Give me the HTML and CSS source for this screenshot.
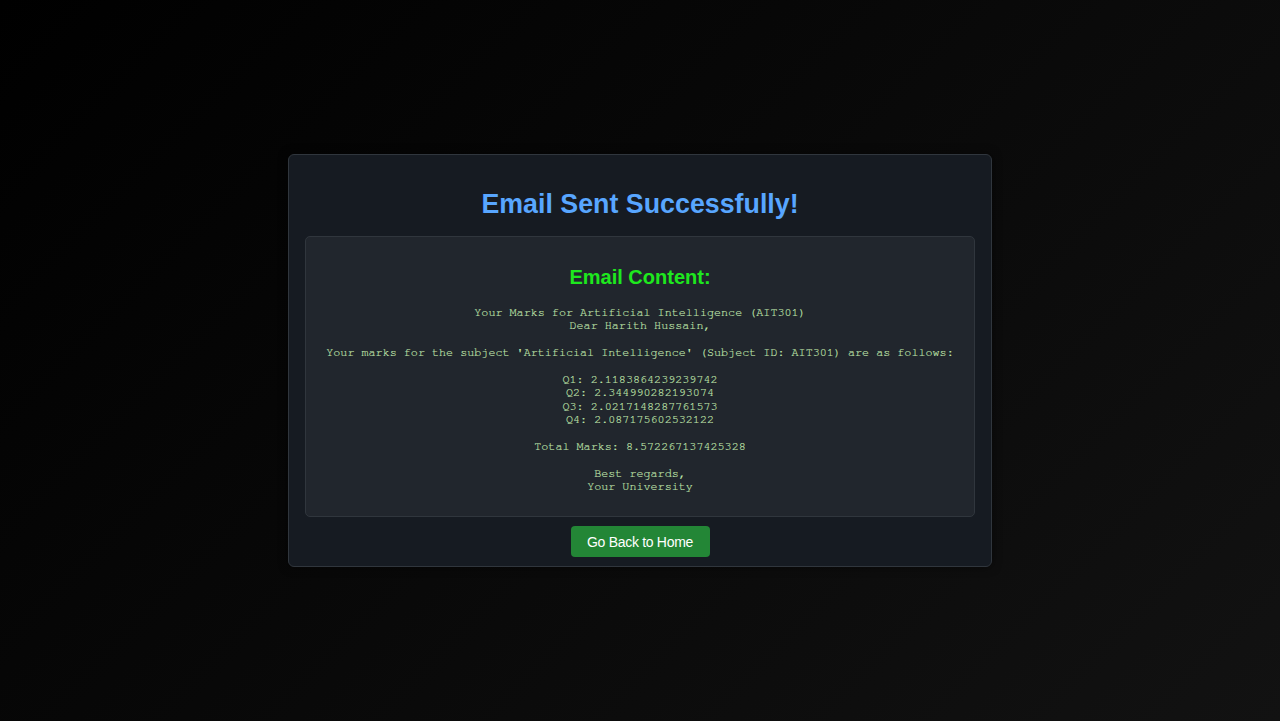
FILE: index.html
```html
<!DOCTYPE html>
<html lang="en">
<head>
<meta charset="utf-8">
<title>Email Sent</title>
<link rel="stylesheet" href="styles.css">
</head>
<body>
<main class="card">
  <h1 class="title">Email Sent Successfully!</h1>
  <section class="email-box">
    <h2 class="email-heading">Email Content:</h2>
    <pre class="email-body">Your Marks for Artificial Intelligence (AIT301)
Dear Harith Hussain,

Your marks for the subject 'Artificial Intelligence' (Subject ID: AIT301) are as follows:

Q1: 2.1183864239239742
Q2: 2.344990282193074
Q3: 2.0217148287761573
Q4: 2.087175602532122

Total Marks: 8.572267137425328

Best regards,
Your University</pre>
  </section>
  <a class="home-btn" href="#">Go Back to Home</a>
</main>
</body>
</html>
```

FILE: styles.css
```css
html, body {
  height: 100%;
}

body {
  margin: 0;
  font-family: "Liberation Sans", Arial, sans-serif;
  background: linear-gradient(135deg, #000000 0%, #080808 45%, #121212 100%);
  display: flex;
  align-items: center;
  justify-content: center;
}

.card {
  box-sizing: border-box;
  width: 704px;
  background: #161b22;
  border: 1px solid #30363d;
  border-radius: 6px;
  padding: 16px 16px 9px;
  display: flex;
  flex-direction: column;
  align-items: center;
  box-shadow: 0 0 10px rgba(0, 0, 0, 0.5);
}

.title {
  margin: 18px 0 16px;
  font-size: 26.8px;
  line-height: 31px;
  font-weight: bold;
  color: #58a6ff;
  text-align: center;
}

.email-box {
  box-sizing: border-box;
  width: 100%;
  background: #21262d;
  border: 1px solid #30363d;
  border-radius: 5px;
  padding: 12px;
  text-align: center;
}

.email-heading {
  margin: 17px 0 17px;
  font-size: 20px;
  line-height: 23px;
  font-weight: bold;
  color: #1ee81e;
}

.email-body {
  margin: 0 0 11px;
  font-family: "Nimbus Mono PS", "Nimbus Mono L", FreeMono, Courier, "Courier New", "Liberation Mono", monospace;
  font-size: 11.75px;
  line-height: 13.4px;
  color: #c4eab0;
  -webkit-text-stroke: 0.15px #c4eab0;
  white-space: pre-wrap;
  text-align: center;
}

.home-btn {
  margin-top: 9px;
  height: 31px;
  box-sizing: border-box;
  padding: 0 16.5px;
  display: inline-flex;
  align-items: center;
  background: #238636;
  color: #ffffff;
  border-radius: 4px;
  font-size: 14px;
  letter-spacing: -0.3px;
  text-decoration: none;
}
```
